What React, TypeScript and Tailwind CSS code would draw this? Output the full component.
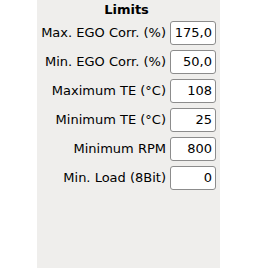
const rows: [string, string][] = [
  ['Max. EGO Corr. (%)', '175,0'],
  ['Min. EGO Corr. (%)', '50,0'],
  ['Maximum TE (°C)', '108'],
  ['Minimum TE (°C)', '25'],
  ['Minimum RPM', '800'],
  ['Min. Load (8Bit)', '0'],
];

export default function App() {
  return (
    <div className="w-[258px] h-[268px] bg-white flex font-['DejaVu_Sans',sans-serif] text-[13px] text-black">
      <div className="ml-[37px] w-[183px] h-full bg-[#efeeec] flex flex-col pr-[4px]">
        <div className="h-[21px] pt-[1px] text-center font-bold leading-[17px]">Limits</div>
        <div className="flex flex-col gap-[5px]">
          {rows.map(([label, value]) => (
            <div key={label} className="flex items-center justify-end gap-[4px]">
              <span className="whitespace-nowrap leading-[16px]">{label}</span>
              <div className="w-[46px] h-[24px] bg-white border border-[#8c8c8c] rounded-[3px] text-right pr-[3px] leading-[22px]">
                {value}
              </div>
            </div>
          ))}
        </div>
      </div>
    </div>
  );
}
